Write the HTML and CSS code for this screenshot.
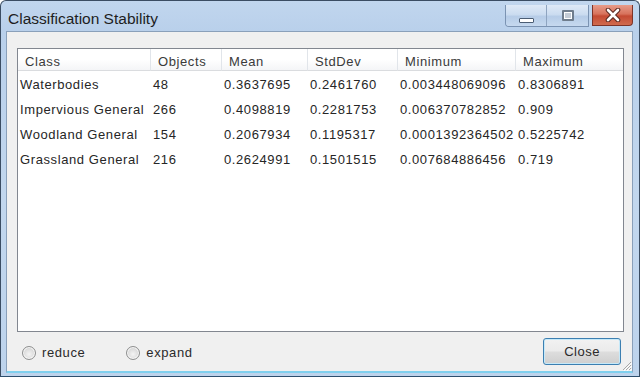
FILE: index.html
```html
<!DOCTYPE html>
<html>
<head>
<meta charset="utf-8">
<link rel="stylesheet" href="styles.css">
</head>
<body>
<div class="window">
  <div class="titlebar">
    <span class="title">Classification Stability</span>
    <div class="caption-buttons">
      <div class="cap-group">
        <span class="cap cap-min"><span class="min-glyph"></span></span>
        <span class="cap cap-max"><span class="max-glyph"></span></span>
      </div>
      <span class="cap cap-close">
        <svg width="16" height="14" viewBox="0 0 16 14">
          <path d="M3 2 L13 12 M13 2 L3 12" stroke="#5a2a22" stroke-width="4.6" stroke-linecap="round"/>
          <path d="M3 2 L13 12 M13 2 L3 12" stroke="#ffffff" stroke-width="2.6" stroke-linecap="round"/>
        </svg>
      </span>
    </div>
  </div>
  <div class="client">
    <div class="listview">
      <div class="lv-grid">
        <div class="hd">Class</div>
        <div class="hd">Objects</div>
        <div class="hd">Mean</div>
        <div class="hd">StdDev</div>
        <div class="hd">Minimum</div>
        <div class="hd">Maximum</div>

        <div class="cell">Waterbodies</div>
        <div class="cell">48</div>
        <div class="cell">0.3637695</div>
        <div class="cell">0.2461760</div>
        <div class="cell">0.003448069096</div>
        <div class="cell">0.8306891</div>

        <div class="cell">Impervious General</div>
        <div class="cell">266</div>
        <div class="cell">0.4098819</div>
        <div class="cell">0.2281753</div>
        <div class="cell">0.006370782852</div>
        <div class="cell">0.909</div>

        <div class="cell">Woodland General</div>
        <div class="cell">154</div>
        <div class="cell">0.2067934</div>
        <div class="cell">0.1195317</div>
        <div class="cell">0.0001392364502</div>
        <div class="cell">0.5225742</div>

        <div class="cell">Grassland General</div>
        <div class="cell">216</div>
        <div class="cell">0.2624991</div>
        <div class="cell">0.1501515</div>
        <div class="cell">0.007684886456</div>
        <div class="cell">0.719</div>
      </div>
    </div>
    <div class="footer">
      <label class="radio"><span class="radio-circle"></span><span class="radio-text">reduce</span></label>
      <label class="radio radio-second"><span class="radio-circle"></span><span class="radio-text">expand</span></label>
      <span class="spacer"></span>
      <span class="btn">Close</span>
    </div>
    <svg class="grip" width="12" height="12" viewBox="0 0 12 12">
      <path d="M11 3 L3 11 M11 6 L6 11 M11 9 L9 11" stroke="#a8a8a8" stroke-width="1"/>
      <path d="M12 4 L4 12 M12 7 L7 12 M12 10 L10 12" stroke="#ffffff" stroke-width="1"/>
    </svg>
  </div>
</div>
</body>
</html>
```
FILE: styles.css
```css
html, body {
  margin: 0;
  padding: 0;
  background: #ffffff;
}

.window {
  width: 640px;
  height: 377px;
  box-sizing: border-box;
  border: 1px solid #3b4d63;
  border-radius: 6px 6px 0 0;
  background: linear-gradient(to bottom, #c1d6ee 0px, #b9d0eb 30px, #c2d7ee 200px, #bdd3ec 377px);
  display: flex;
  flex-direction: column;
  padding: 0 6px 3px 5px;
  font-family: "Liberation Sans", Arial, sans-serif;
  border-bottom: 1px solid #2c4f6e;
}

.titlebar {
  height: 30px;
  display: flex;
  justify-content: space-between;
  align-items: flex-start;
  flex: none;
}

.title {
  font-size: 15.5px;
  color: #1e1e1e;
  margin-top: 9px;
  margin-left: 2px;
}

.caption-buttons {
  display: flex;
  gap: 3px;
  margin-top: 4px;
}

.cap-group {
  display: flex;
  border: 1px solid #7b93b2;
  border-radius: 0 0 0 4px;
  border-top: none;
  overflow: hidden;
}

.cap {
  height: 21px;
  display: flex;
  align-items: center;
  justify-content: center;
  box-sizing: border-box;
}

.cap-min {
  width: 41px;
  background: linear-gradient(to bottom, #dfeaf7 0%, #cbdcf0 45%, #b6cce7 55%, #c6d9ef 100%);
  border-right: 1px solid #8ea4c0;
  align-items: flex-end;
  padding-bottom: 3px;
}

.cap-max {
  width: 41px;
  background: linear-gradient(to bottom, #dfeaf7 0%, #cbdcf0 45%, #b6cce7 55%, #c6d9ef 100%);
}

.min-glyph {
  width: 13px;
  height: 3px;
  background: #ffffff;
  border: 1px solid #4b5d74;
  border-radius: 1px;
}

.max-glyph {
  width: 8px;
  height: 7px;
  background: #c4ccd6;
  border: 2px solid #6f7d8d;
  box-shadow: inset 0 0 0 1px #ffffff;
  border-radius: 1px;
}

.cap-close {
  width: 41px;
  border: 1px solid #7d3328;
  border-top: none;
  border-radius: 0 0 4px 0;
  background: linear-gradient(to bottom, #e79c8a 0%, #d7725c 45%, #c44a33 55%, #d06a4e 100%);
}

.client {
  flex: 1;
  position: relative;
  background: #f0f0f0;
  border: 1px solid #8aa0ba;
  border-bottom: 2px solid #7fd0ee;
  display: flex;
  flex-direction: column;
  padding: 16px 8px 4px 10px;
  min-height: 0;
}

.listview {
  height: 284px;
  box-sizing: border-box;
  background: #ffffff;
  border: 1px solid #828790;
  flex: none;
}

.lv-grid {
  display: grid;
  grid-template-columns: 133px 71px 86px 90px 118px 1fr;
  grid-template-rows: 22px repeat(4, 25px);
  font-size: 13px;
  letter-spacing: 0.6px;
}

.hd {
  box-sizing: border-box;
  padding: 4px 0 0 7px;
  display: flex;
  align-items: center;
  color: #3a3a3a;
  background: linear-gradient(to bottom, #ffffff 0%, #ffffff 50%, #f4f5f7 100%);
  border-right: 1px solid #e1e5ea;
  border-bottom: 1px solid #dadcdf;
}

.hd:nth-child(6) {
  border-right: none;
}

.cell {
  display: flex;
  align-items: center;
  padding: 1px 0 0 2px;
  color: #262626;
  white-space: nowrap;
}

.footer {
  display: flex;
  align-items: center;
  margin-top: 6px;
  height: 27px;
  font-size: 13px;
  letter-spacing: 0.6px;
  padding-right: 2px;
}

.radio {
  display: flex;
  align-items: center;
  margin-left: 5px;
  margin-top: 2px;
}

.radio-second {
  margin-left: 41px;
}

.radio-circle {
  width: 14px;
  height: 14px;
  border-radius: 50%;
  box-sizing: border-box;
  border: 1px solid #8e8f8f;
  background: radial-gradient(circle at 50% 60%, #f4f4f4 0%, #dcdcdc 55%, #c9c9c9 100%);
  box-shadow: inset 0 0 0 1px #f8f8f8;
  margin-right: 6px;
}

.radio-text {
  color: #2a2a2a;
}

.spacer {
  flex: 1;
}

.btn {
  width: 78px;
  height: 27px;
  box-sizing: border-box;
  border: 1px solid #3c7fb1;
  border-radius: 3px;
  box-shadow: inset 0 0 0 1px #c6e9f9;
  background: linear-gradient(to bottom, #f2f2f2 0%, #ebebeb 48%, #dddddd 52%, #cfcfcf 100%);
  display: flex;
  align-items: center;
  justify-content: center;
  color: #2a2a2a;
  letter-spacing: 0.5px;
  margin-right: 1px;
}

.grip {
  position: absolute;
  right: 0;
  bottom: 0;
}
```
